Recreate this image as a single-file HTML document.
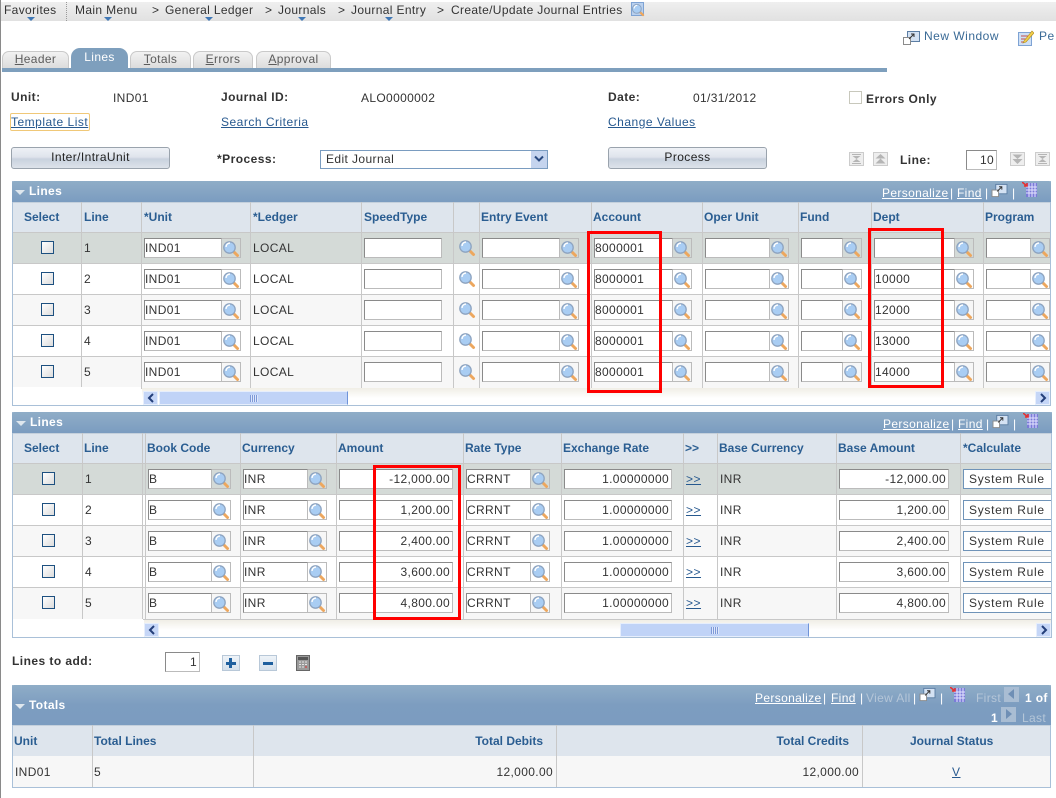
<!DOCTYPE html>
<html><head><meta charset="utf-8"><style>
html,body{margin:0;padding:0;background:#fff}
#p{position:relative;width:1056px;height:798px;overflow:hidden;background:#fff;font:12px "Liberation Sans",Arial,sans-serif;color:#333}
#p div,#p span.a,#p a,#p svg{position:absolute}
.t,a{white-space:nowrap;line-height:16px;letter-spacing:.35px}
a{letter-spacing:.5px}
.b{font-weight:bold;color:#333;letter-spacing:.45px}
a{color:#27598f;text-decoration:underline}
.nv{top:2px;color:#333}
.ar{top:17px;width:0;height:0;border:4px solid transparent;border-top:4px solid #3f77b5;border-bottom:0}
.g{left:12px;width:1039px;background:#fff}
.hd{background:linear-gradient(#8fadc7,#7b9cc0);left:0;right:0;top:0;height:21px;border-radius:2px 2px 0 0}
.hd .t{color:#fff;font-weight:bold}
.hd a{color:#fff;letter-spacing:.35px}
.tri{width:0;height:0;border:5px solid transparent;border-top:5px solid #dfe7ee;border-bottom:0}
.ch{left:0;right:0;top:21px;height:31px;background:#dee5ed;border-top:1px solid #c4d0dc;box-sizing:border-box;border-bottom:1px solid #c8c8c8}
.th{top:6px;font-weight:bold;color:#2a5d91;letter-spacing:0}
.r{left:0;right:0;height:31px;box-sizing:border-box;border-bottom:1px solid #c8c8c8;overflow:hidden}
.r .t{top:7px}
.r a{top:7px}
.tt .t,.tt a{top:8px}
.d{background:#d4dad7}.w{background:#fff}.l{background:#f7f7f7}
.i{top:5px;height:20px;box-sizing:border-box;background:#fff;border:1px solid #bbb;border-top:1px solid #8a8a8a;border-left:1px solid #8a8a8a;line-height:19px;padding:0;letter-spacing:.35px;white-space:nowrap;overflow:hidden;color:#333}
.n{text-align:right;padding-right:2px}
.s{border:1px solid #6f93b8;border-right:0;padding-left:5px;letter-spacing:.7px}
.c{top:8px;width:13px;height:13px;box-sizing:border-box;border:1px solid #1d5080;background:linear-gradient(135deg,#fff,#dcdcdc)}
.x{top:5px;width:19px;height:20px;box-sizing:border-box;border:1px solid #bbb;border-left:0}
.x svg{left:0;top:1px;width:18px;height:18px}
.m{width:18px;height:18px}
.v{top:0;bottom:0;width:1px;background:#c8c8c8}
.red{box-sizing:border-box;border:3px solid #f00;background:transparent;z-index:5}
.btn{box-sizing:border-box;border:1px solid #9aa3ad;border-radius:3px;background:linear-gradient(#eef1f6 0,#dfe4ec 45%,#c9d2de 55%,#dde3ea 100%);text-align:center;color:#222;line-height:19px;letter-spacing:.4px}
.tab{top:51px;height:17px;box-sizing:border-box;background:linear-gradient(#f2f2f2,#dcdcdc);border:1px solid #c9c9c9;border-bottom:0;border-radius:7px 7px 0 0;text-align:center;line-height:15px;color:#5c5c5c;letter-spacing:.35px}
.tab u{text-decoration:underline}
.sb{height:17px;background:linear-gradient(#f0eee6,#fff 60%)}
.sbt{background:#c0d3f7;box-sizing:border-box;border:1px solid #e6eefc;border-right:1px solid #6f93d8;top:3px;height:14px}
.sbb{background:#c5d6f7;top:3px;width:15px;height:14px;box-sizing:border-box;border:1px solid #e6eefc}
.sbb svg{left:3px;top:1px;width:8px;height:10px}
.pg{box-sizing:border-box;width:15px;height:15px;background:#e7e7e7;border:1px solid #c9c9c9}
.li{top:152px;width:15px;height:14px}
</style></head><body>
<svg width="0" height="0" style="position:absolute"><defs>
<symbol id="m" viewBox="0 0 18 18"><path d="M11.500 11.500L15.500 15.500" stroke="#eda75e" stroke-width="3" stroke-linecap="round"/><circle cx="7.500" cy="7.500" r="5.700" fill="#a9cdf3" stroke="#8ea4c0" stroke-width="1.300"/><path d="M4 7a4 4 0 0 1 4-4" stroke="#fff" stroke-width="1.400" fill="none"/></symbol>
<symbol id="gr" viewBox="0 0 15 15"><rect x="4" y="1" width="11" height="14" fill="#7b7bd8"/><path d="M4 5h11M4 8h11M4 11h11M7 1v14M10 1v14M13 1v14" stroke="#e5e5ff" stroke-width="1"/><path d="M0 0l5 4M5 1v3H2" stroke="#e63030" stroke-width="1.500" fill="none"/></symbol>
<symbol id="nw" viewBox="0 0 17 16"><rect x="4.500" y="1.500" width="12" height="10" fill="#d4e2f3" stroke="#5c7ea4"/><rect x=".5" y="7.500" width="7" height="7" fill="#fff" stroke="#8b8b8b"/><path d="M6 9l5-5M8 4h3v3" stroke="#333" fill="none"/></symbol>
<symbol id="hg" viewBox="0 0 15 14"><rect x=".5" y=".5" width="14" height="13" fill="#eee" stroke="#ccc"/><path d="M3 2h9v1H3zM3 11h9v1H3zM3.500 4h8L7.500 7zM3.500 10h8L7.500 7z" fill="#b5b5b5"/></symbol>
<symbol id="up" viewBox="0 0 15 14"><rect x=".5" y=".5" width="14" height="13" fill="#eee" stroke="#ccc"/><path d="M7.500 2l5 4.500h-10zM7.500 6.500l5 5h-10z" fill="#b5b5b5"/></symbol>
<symbol id="dn" viewBox="0 0 15 14"><rect x=".5" y=".5" width="14" height="13" fill="#eee" stroke="#ccc"/><path d="M2.500 2.500h10L7.500 7zM2.500 7h10l-5 5z" fill="#b5b5b5"/></symbol>
<symbol id="cl" viewBox="0 0 8 10"><path d="M6 1L2 5l4 4" fill="none" stroke="#243f7a" stroke-width="2"/></symbol>
<symbol id="cr" viewBox="0 0 8 10"><path d="M2 1l4 4-4 4" fill="none" stroke="#243f7a" stroke-width="2"/></symbol>
</defs></svg>
<div id="p">
<div style="left:0;top:0;width:1px;height:798px;background:#8a8a8a"></div>
<div style="left:1px;top:2px;right:0;height:19px;background:linear-gradient(#efefef,#e1e1e1)"></div>
<span class="a t nv" style="left:4px">Favorites</span><div style="left:66px;top:2px;height:19px;border-left:1px dotted #999"></div>
<span class="a t nv" style="left:75px">Main Menu</span><span class="a t nv" style="left:152px">&gt;</span>
<span class="a t nv" style="left:165px">General Ledger</span><span class="a t nv" style="left:265px">&gt;</span>
<span class="a t nv" style="left:278px">Journals</span><span class="a t nv" style="left:338px">&gt;</span>
<span class="a t nv" style="left:351px">Journal Entry</span><span class="a t nv" style="left:437px">&gt;</span>
<span class="a t nv" style="left:451px">Create/Update Journal Entries</span>
<div class="ar" style="left:27px"></div><div class="ar" style="left:104px"></div><div class="ar" style="left:205px"></div><div class="ar" style="left:298px"></div><div class="ar" style="left:385px"></div>
<div style="left:631px;top:2px;width:13px;height:14px;background:#b9d0ee;border:1px solid #7ea3d4;box-sizing:border-box"></div><svg class="m" style="left:631px;top:3px;width:14px;height:14px"><use href="#m"/></svg>

<svg style="left:903px;top:30px;width:17px;height:16px"><use href="#nw"/></svg>
<a style="left:924px;top:28px;color:#3a6a96;text-decoration:none">New Window</a>
<svg style="left:1018px;top:29px;width:16px;height:17px" viewBox="0 0 16 17"><rect x=".5" y="3.500" width="13" height="13" fill="#cfe0f5" stroke="#7ea3d4"/><path d="M3 7h7M3 10h5M3 13h4" stroke="#c05050"/><path d="M6 12L14 2l2 2-8 9-3 1z" fill="#f2cf4a" stroke="#b08a20" stroke-width=".6"/></svg>
<a style="left:1039px;top:28px;color:#3a6a96;text-decoration:none">Pe</a>

<div class="tab" style="left:2px;width:67px"><u>H</u>eader</div>
<div class="tab" style="left:71px;width:57px;top:48px;height:20px;background:#7e9fbd;border-color:#7e9fbd;color:#fff;line-height:17px;border-radius:9px 9px 0 0">Lines</div>
<div class="tab" style="left:130px;width:61px"><u>T</u>otals</div>
<div class="tab" style="left:193px;width:60px"><u>E</u>rrors</div>
<div class="tab" style="left:256px;width:75px"><u>A</u>pproval</div>
<div style="left:2px;top:68px;width:885px;height:4px;background:#7e9fbd"></div>

<span class="a t b" style="left:11px;top:89px">Unit:</span><span class="a t" style="left:113px;top:90px">IND01</span>
<span class="a t b" style="left:221px;top:89px">Journal ID:</span><span class="a t" style="left:361px;top:90px">ALO0000002</span>
<span class="a t b" style="left:608px;top:89px">Date:</span><span class="a t" style="left:693px;top:90px">01/31/2012</span>
<div style="left:849px;top:91px;width:13px;height:13px;box-sizing:border-box;border:1px solid #c8c8bc"></div><span class="a t b" style="left:866px;top:91px">Errors Only</span>
<div style="left:10px;top:113px;width:80px;height:18px;box-sizing:border-box;border:1px solid #f0c878;border-radius:2px"></div>
<a style="left:11px;top:114px">Template List</a><a style="left:221px;top:114px">Search Criteria</a><a style="left:608px;top:114px">Change Values</a>
<div class="btn" style="left:11px;top:147px;width:159px;height:22px">Inter/IntraUnit</div>
<span class="a t b" style="left:217px;top:151px">*Process:</span>
<div style="left:320px;top:150px;width:228px;height:19px;box-sizing:border-box;border:1px solid #7a9cc0;line-height:17px;padding-left:5px;letter-spacing:.4px">Edit Journal<div style="right:0;top:0;width:16px;height:17px;background:#c5d4ee"></div><svg style="right:3px;top:4px;width:10px;height:8px" viewBox="0 0 10 8"><path d="M1 1.500L5 5.500L9 1.500" fill="none" stroke="#2a4a80" stroke-width="2"/></svg></div>
<div class="btn" style="left:608px;top:147px;width:159px;height:22px">Process</div>
<svg class="li" style="left:849px"><use href="#hg"/></svg>
<svg class="li" style="left:873px"><use href="#up"/></svg>
<span class="a t b" style="left:900px;top:152px">Line:</span>
<div class="i n" style="left:966px;top:150px;width:31px">10</div>
<svg class="li" style="left:1010px"><use href="#dn"/></svg>
<svg class="li" style="left:1035px"><use href="#hg"/></svg>

<!-- GRID 1 -->
<div class="g" style="top:181px;height:225px;border-bottom:1px solid #a9c0d8;box-sizing:border-box;border-left:1px solid #a9c0d8;border-right:1px solid #a9c0d8">
<div class="hd" style="left:-1px;right:-1px"><div class="tri" style="left:3px;top:9px"></div><span class="a t" style="left:17px;top:2px">Lines</span>
<a style="left:870px;top:4px">Personalize</a><span class="a t" style="left:938px;top:4px;font-weight:normal">|</span><a style="left:945px;top:4px">Find</a><span class="a t" style="left:973px;top:4px;font-weight:normal">|</span>
<svg style="left:979px;top:2px;width:17px;height:15px"><use href="#nw"/></svg><span class="a t" style="left:1000px;top:4px;font-weight:normal">|</span><svg style="left:1010px;top:1px;width:15px;height:15px"><use href="#gr"/></svg></div>
<div class="ch"><span class="a t th" style="left:11px">Select</span><span class="a t th" style="left:71px">Line</span><span class="a t th" style="left:131px">*Unit</span><span class="a t th" style="left:240px">*Ledger</span><span class="a t th" style="left:351px">SpeedType</span><span class="a t th" style="left:468px">Entry Event</span><span class="a t th" style="left:580px">Account</span><span class="a t th" style="left:691px">Oper Unit</span><span class="a t th" style="left:787px">Fund</span><span class="a t th" style="left:860px">Dept</span><span class="a t th" style="left:972px">Program</span></div>

<div class="r d" style="top:52px"><div class="c" style="left:28px"></div><span class="a t" style="left:71px">1</span><div class="i" style="left:131px;width:78px">IND01</div><div class="x" style="left:209px"><svg><use href="#m"/></svg></div><span class="a t" style="left:240px">LOCAL</span><div class="i" style="left:351px;width:78px"></div><svg class="m" style="left:445px;top:6px"><use href="#m"/></svg><div class="i" style="left:469px;width:78px"></div><div class="x" style="left:547px"><svg><use href="#m"/></svg></div><div class="i" style="left:581px;width:79px">8000001</div><div class="x" style="left:660px"><svg><use href="#m"/></svg></div><div class="i" style="left:692px;width:65px"></div><div class="x" style="left:757px"><svg><use href="#m"/></svg></div><div class="i" style="left:788px;width:42px"></div><div class="x" style="left:830px"><svg><use href="#m"/></svg></div><div class="i" style="left:861px;width:81px"></div><div class="x" style="left:942px"><svg><use href="#m"/></svg></div><div class="i" style="left:973px;width:45px"></div><div class="x" style="left:1018px"><svg><use href="#m"/></svg></div></div>

<div class="r w" style="top:83px"><div class="c" style="left:28px"></div><span class="a t" style="left:71px">2</span><div class="i" style="left:131px;width:78px">IND01</div><div class="x" style="left:209px"><svg><use href="#m"/></svg></div><span class="a t" style="left:240px">LOCAL</span><div class="i" style="left:351px;width:78px"></div><svg class="m" style="left:445px;top:6px"><use href="#m"/></svg><div class="i" style="left:469px;width:78px"></div><div class="x" style="left:547px"><svg><use href="#m"/></svg></div><div class="i" style="left:581px;width:79px">8000001</div><div class="x" style="left:660px"><svg><use href="#m"/></svg></div><div class="i" style="left:692px;width:65px"></div><div class="x" style="left:757px"><svg><use href="#m"/></svg></div><div class="i" style="left:788px;width:42px"></div><div class="x" style="left:830px"><svg><use href="#m"/></svg></div><div class="i" style="left:861px;width:81px">10000</div><div class="x" style="left:942px"><svg><use href="#m"/></svg></div><div class="i" style="left:973px;width:45px"></div><div class="x" style="left:1018px"><svg><use href="#m"/></svg></div></div>

<div class="r l" style="top:114px"><div class="c" style="left:28px"></div><span class="a t" style="left:71px">3</span><div class="i" style="left:131px;width:78px">IND01</div><div class="x" style="left:209px"><svg><use href="#m"/></svg></div><span class="a t" style="left:240px">LOCAL</span><div class="i" style="left:351px;width:78px"></div><svg class="m" style="left:445px;top:6px"><use href="#m"/></svg><div class="i" style="left:469px;width:78px"></div><div class="x" style="left:547px"><svg><use href="#m"/></svg></div><div class="i" style="left:581px;width:79px">8000001</div><div class="x" style="left:660px"><svg><use href="#m"/></svg></div><div class="i" style="left:692px;width:65px"></div><div class="x" style="left:757px"><svg><use href="#m"/></svg></div><div class="i" style="left:788px;width:42px"></div><div class="x" style="left:830px"><svg><use href="#m"/></svg></div><div class="i" style="left:861px;width:81px">12000</div><div class="x" style="left:942px"><svg><use href="#m"/></svg></div><div class="i" style="left:973px;width:45px"></div><div class="x" style="left:1018px"><svg><use href="#m"/></svg></div></div>

<div class="r w" style="top:145px"><div class="c" style="left:28px"></div><span class="a t" style="left:71px">4</span><div class="i" style="left:131px;width:78px">IND01</div><div class="x" style="left:209px"><svg><use href="#m"/></svg></div><span class="a t" style="left:240px">LOCAL</span><div class="i" style="left:351px;width:78px"></div><svg class="m" style="left:445px;top:6px"><use href="#m"/></svg><div class="i" style="left:469px;width:78px"></div><div class="x" style="left:547px"><svg><use href="#m"/></svg></div><div class="i" style="left:581px;width:79px">8000001</div><div class="x" style="left:660px"><svg><use href="#m"/></svg></div><div class="i" style="left:692px;width:65px"></div><div class="x" style="left:757px"><svg><use href="#m"/></svg></div><div class="i" style="left:788px;width:42px"></div><div class="x" style="left:830px"><svg><use href="#m"/></svg></div><div class="i" style="left:861px;width:81px">13000</div><div class="x" style="left:942px"><svg><use href="#m"/></svg></div><div class="i" style="left:973px;width:45px"></div><div class="x" style="left:1018px"><svg><use href="#m"/></svg></div></div>

<div class="r l" style="top:176px;height:32px"><div class="c" style="left:28px"></div><span class="a t" style="left:71px">5</span><div class="i" style="left:131px;width:78px">IND01</div><div class="x" style="left:209px"><svg><use href="#m"/></svg></div><span class="a t" style="left:240px">LOCAL</span><div class="i" style="left:351px;width:78px"></div><svg class="m" style="left:445px;top:6px"><use href="#m"/></svg><div class="i" style="left:469px;width:78px"></div><div class="x" style="left:547px"><svg><use href="#m"/></svg></div><div class="i" style="left:581px;width:79px">8000001</div><div class="x" style="left:660px"><svg><use href="#m"/></svg></div><div class="i" style="left:692px;width:65px"></div><div class="x" style="left:757px"><svg><use href="#m"/></svg></div><div class="i" style="left:788px;width:42px"></div><div class="x" style="left:830px"><svg><use href="#m"/></svg></div><div class="i" style="left:861px;width:81px">14000</div><div class="x" style="left:942px"><svg><use href="#m"/></svg></div><div class="i" style="left:973px;width:45px"></div><div class="x" style="left:1018px"><svg><use href="#m"/></svg></div></div>

<div class="v" style="left:68px;top:21px;bottom:18px"></div><div class="v" style="left:128px;top:21px;bottom:17px"></div><div class="v" style="left:237px;top:21px;bottom:17px"></div><div class="v" style="left:348px;top:21px;bottom:17px"></div><div class="v" style="left:440px;top:21px;bottom:17px"></div><div class="v" style="left:466px;top:21px;bottom:17px"></div><div class="v" style="left:578px;top:21px;bottom:17px"></div><div class="v" style="left:689px;top:21px;bottom:17px"></div><div class="v" style="left:785px;top:21px;bottom:17px"></div><div class="v" style="left:858px;top:21px;bottom:17px"></div><div class="v" style="left:970px;top:21px;bottom:17px"></div>
<div style="left:0;top:206px;width:128px;height:17px;background:#fff"></div>
<div class="sb" style="left:129px;right:0;top:207px"><div class="sbb" style="left:1px"><svg><use href="#cl"/></svg></div><div class="sbt" style="left:17px;width:189px"><span class="a" style="left:90px;top:3px;width:8px;height:7px;background:repeating-linear-gradient(90deg,#7e99d8 0 1px,#dde7fb 1px 2px)"></span></div><div class="sbb" style="right:0"><svg><use href="#cr"/></svg></div></div>
</div>

<!-- GRID 2 -->
<div class="g" style="top:412px;height:226px;left:12px;width:1040px;border-bottom:1px solid #a9c0d8;box-sizing:border-box;border-left:1px solid #a9c0d8;border-right:1px solid #a9c0d8">
<div class="hd" style="left:-1px;right:-1px"><div class="tri" style="left:4px;top:9px"></div><span class="a t" style="left:18px;top:2px">Lines</span>
<a style="left:871px;top:4px">Personalize</a><span class="a t" style="left:939px;top:4px;font-weight:normal">|</span><a style="left:946px;top:4px">Find</a><span class="a t" style="left:974px;top:4px;font-weight:normal">|</span>
<svg style="left:980px;top:2px;width:17px;height:15px"><use href="#nw"/></svg><span class="a t" style="left:1001px;top:4px;font-weight:normal">|</span><svg style="left:1011px;top:1px;width:15px;height:15px"><use href="#gr"/></svg></div>
<div class="ch"><span class="a t th" style="left:11px">Select</span><span class="a t th" style="left:71px">Line</span><span class="a t th" style="left:134px">Book Code</span><span class="a t th" style="left:229px">Currency</span><span class="a t th" style="left:325px">Amount</span><span class="a t th" style="left:452px">Rate Type</span><span class="a t th" style="left:550px">Exchange Rate</span><span class="a t th" style="left:672px">&gt;&gt;</span><span class="a t th" style="left:706px">Base Currency</span><span class="a t th" style="left:825px">Base Amount</span><span class="a t th" style="left:950px">*Calculate</span></div>

<div class="r d" style="top:52px"><div class="c" style="left:29px"></div><span class="a t" style="left:72px">1</span><div class="i" style="left:135px;width:64px">B</div><div class="x" style="left:199px"><svg><use href="#m"/></svg></div><div class="i" style="left:230px;width:65px">INR</div><div class="x" style="left:295px"><svg><use href="#m"/></svg></div><div class="i n" style="left:326px;width:114px">-12,000.00</div><div class="i" style="left:453px;width:65px">CRRNT</div><div class="x" style="left:518px"><svg><use href="#m"/></svg></div><div class="i n" style="left:551px;width:108px">1.00000000</div><a style="left:673px">&gt;&gt;</a><span class="a t" style="left:707px">INR</span><div class="i n" style="left:826px;width:110px">-12,000.00</div><div class="i s" style="left:950px;width:90px">System Rule</div></div>

<div class="r w" style="top:83px"><div class="c" style="left:29px"></div><span class="a t" style="left:72px">2</span><div class="i" style="left:135px;width:64px">B</div><div class="x" style="left:199px"><svg><use href="#m"/></svg></div><div class="i" style="left:230px;width:65px">INR</div><div class="x" style="left:295px"><svg><use href="#m"/></svg></div><div class="i n" style="left:326px;width:114px">1,200.00</div><div class="i" style="left:453px;width:65px">CRRNT</div><div class="x" style="left:518px"><svg><use href="#m"/></svg></div><div class="i n" style="left:551px;width:108px">1.00000000</div><a style="left:673px">&gt;&gt;</a><span class="a t" style="left:707px">INR</span><div class="i n" style="left:826px;width:110px">1,200.00</div><div class="i s" style="left:950px;width:90px">System Rule</div></div>

<div class="r l" style="top:114px"><div class="c" style="left:29px"></div><span class="a t" style="left:72px">3</span><div class="i" style="left:135px;width:64px">B</div><div class="x" style="left:199px"><svg><use href="#m"/></svg></div><div class="i" style="left:230px;width:65px">INR</div><div class="x" style="left:295px"><svg><use href="#m"/></svg></div><div class="i n" style="left:326px;width:114px">2,400.00</div><div class="i" style="left:453px;width:65px">CRRNT</div><div class="x" style="left:518px"><svg><use href="#m"/></svg></div><div class="i n" style="left:551px;width:108px">1.00000000</div><a style="left:673px">&gt;&gt;</a><span class="a t" style="left:707px">INR</span><div class="i n" style="left:826px;width:110px">2,400.00</div><div class="i s" style="left:950px;width:90px">System Rule</div></div>

<div class="r w" style="top:145px"><div class="c" style="left:29px"></div><span class="a t" style="left:72px">4</span><div class="i" style="left:135px;width:64px">B</div><div class="x" style="left:199px"><svg><use href="#m"/></svg></div><div class="i" style="left:230px;width:65px">INR</div><div class="x" style="left:295px"><svg><use href="#m"/></svg></div><div class="i n" style="left:326px;width:114px">3,600.00</div><div class="i" style="left:453px;width:65px">CRRNT</div><div class="x" style="left:518px"><svg><use href="#m"/></svg></div><div class="i n" style="left:551px;width:108px">1.00000000</div><a style="left:673px">&gt;&gt;</a><span class="a t" style="left:707px">INR</span><div class="i n" style="left:826px;width:110px">3,600.00</div><div class="i s" style="left:950px;width:90px">System Rule</div></div>

<div class="r l" style="top:176px;height:32px"><div class="c" style="left:29px"></div><span class="a t" style="left:72px">5</span><div class="i" style="left:135px;width:64px">B</div><div class="x" style="left:199px"><svg><use href="#m"/></svg></div><div class="i" style="left:230px;width:65px">INR</div><div class="x" style="left:295px"><svg><use href="#m"/></svg></div><div class="i n" style="left:326px;width:114px">4,800.00</div><div class="i" style="left:453px;width:65px">CRRNT</div><div class="x" style="left:518px"><svg><use href="#m"/></svg></div><div class="i n" style="left:551px;width:108px">1.00000000</div><a style="left:673px">&gt;&gt;</a><span class="a t" style="left:707px">INR</span><div class="i n" style="left:826px;width:110px">4,800.00</div><div class="i s" style="left:950px;width:90px">System Rule</div></div>

<div class="v" style="left:69px;top:21px;bottom:18px"></div><div class="v" style="left:129px;top:21px;bottom:18px"></div><div class="v" style="left:132px;top:21px;bottom:18px"></div><div class="v" style="left:227px;top:21px;bottom:18px"></div><div class="v" style="left:323px;top:21px;bottom:18px"></div><div class="v" style="left:450px;top:21px;bottom:18px"></div><div class="v" style="left:548px;top:21px;bottom:18px"></div><div class="v" style="left:670px;top:21px;bottom:18px"></div><div class="v" style="left:704px;top:21px;bottom:18px"></div><div class="v" style="left:823px;top:21px;bottom:18px"></div><div class="v" style="left:947px;top:21px;bottom:18px"></div>
<div style="left:0;top:207px;width:130px;height:17px;background:#fff"></div>
<div class="sb" style="left:131px;right:0;top:208px"><div class="sbb" style="left:0"><svg><use href="#cl"/></svg></div><div class="sbt" style="left:476px;width:189px"><span class="a" style="left:90px;top:3px;width:8px;height:7px;background:repeating-linear-gradient(90deg,#7e99d8 0 1px,#dde7fb 1px 2px)"></span></div><div class="sbb" style="right:0"><svg><use href="#cr"/></svg></div></div>
</div>

<div class="red" style="left:587px;top:231px;width:75px;height:162px"></div>
<div class="red" style="left:868px;top:228px;width:76px;height:160px"></div>
<div class="red" style="left:373px;top:465px;width:88px;height:155px"></div>

<span class="a t b" style="left:12px;top:653px">Lines to add:</span>
<div class="i n" style="left:165px;top:652px;width:35px">1</div>
<div style="left:222px;top:655px;width:18px;height:16px;box-sizing:border-box;border:1px solid #b8c8d8;background:linear-gradient(#eef3f8,#d4e0ec)"></div><div style="left:226px;top:662px;width:10px;height:3px;background:#1e5f9e"></div><div style="left:229px;top:658px;width:3px;height:10px;background:#1e5f9e"></div>
<div style="left:259px;top:655px;width:18px;height:16px;box-sizing:border-box;border:1px solid #b8c8d8;background:linear-gradient(#eef3f8,#d4e0ec)"></div><div style="left:263px;top:662px;width:10px;height:3px;background:#1e5f9e"></div>
<svg style="left:296px;top:655px;width:14px;height:16px" viewBox="0 0 14 16"><rect x=".5" y=".5" width="13" height="15" fill="#9a9a9a" stroke="#666"/><rect x="2" y="2" width="10" height="3" fill="#555"/><path d="M3 7h2M6 7h2M9 7h2M3 9.500h2M6 9.500h2M9 9.500h2M3 12h2M6 12h2" stroke="#e4e4e4"/><path d="M9 12h2" stroke="#d33"/></svg>

<!-- TOTALS -->
<div class="g" style="top:685px;height:103px;box-sizing:border-box;border-bottom:1px solid #a9c0d8;border-left:1px solid #a9c0d8;border-right:1px solid #a9c0d8">
<div class="hd" style="left:-1px;right:-1px;height:40px;background:linear-gradient(#8fadc7,#7d9dc0 50%,#7b9cc0)"><div class="tri" style="left:3px;top:19px"></div><span class="a t" style="left:17px;top:12px">Totals</span>
<a style="left:743px;top:5px">Personalize</a><span class="a t" style="left:811px;top:5px;font-weight:normal">|</span><a style="left:819px;top:5px">Find</a><span class="a t" style="left:848px;top:5px;font-weight:normal">|</span><span class="a t" style="left:854px;top:5px;font-weight:normal;color:#b5c6d8">View All</span><span class="a t" style="left:901px;top:5px;font-weight:normal">|</span>
<svg style="left:907px;top:2px;width:17px;height:15px"><use href="#nw"/></svg><span class="a t" style="left:928px;top:5px;font-weight:normal">|</span><svg style="left:938px;top:2px;width:15px;height:15px"><use href="#gr"/></svg>
<span class="a t" style="left:964px;top:5px;font-weight:normal;color:#b5c6d8">First</span><div class="pg" style="left:992px;top:2px;background:#a9bdd3;border-color:#a9bdd3"></div><svg style="left:995px;top:4px;width:8px;height:11px"><path d="M7 0v10L1 5z" fill="#6f8fb5"/></svg><span class="a t" style="left:1013px;top:5px">1 of</span>
<span class="a t" style="left:979px;top:25px">1</span><div class="pg" style="left:989px;top:22px;background:#a9bdd3;border-color:#a9bdd3"></div><svg style="left:993px;top:24px;width:8px;height:11px"><path d="M1 0v10l6-5z" fill="#6f8fb5"/></svg><span class="a t" style="left:1010px;top:25px;font-weight:normal;color:#b5c6d8">Last</span></div>
<div class="ch" style="top:40px;height:32px;left:0"><span class="a t th" style="left:1px;top:7px">Unit</span><span class="a t th" style="left:81px;top:7px">Total Lines</span><span class="a t th" style="right:507px;top:7px">Total Debits</span><span class="a t th" style="right:201px;top:7px">Total Credits</span><span class="a t th" style="left:897px;top:7px">Journal Status</span></div>
<div class="r l tt" style="top:71px;left:0;height:31px;border-bottom:0"><span class="a t" style="left:2px">IND01</span><span class="a t" style="left:81px">5</span><span class="a t" style="right:497px">12,000.00</span><span class="a t" style="right:191px">12,000.00</span><a style="left:939px">V</a></div>
<div class="v" style="left:79px;top:40px"></div><div class="v" style="left:240px;top:40px"></div><div class="v" style="left:543px;top:40px"></div><div class="v" style="left:849px;top:40px"></div>
</div>
</div>
</body></html>
